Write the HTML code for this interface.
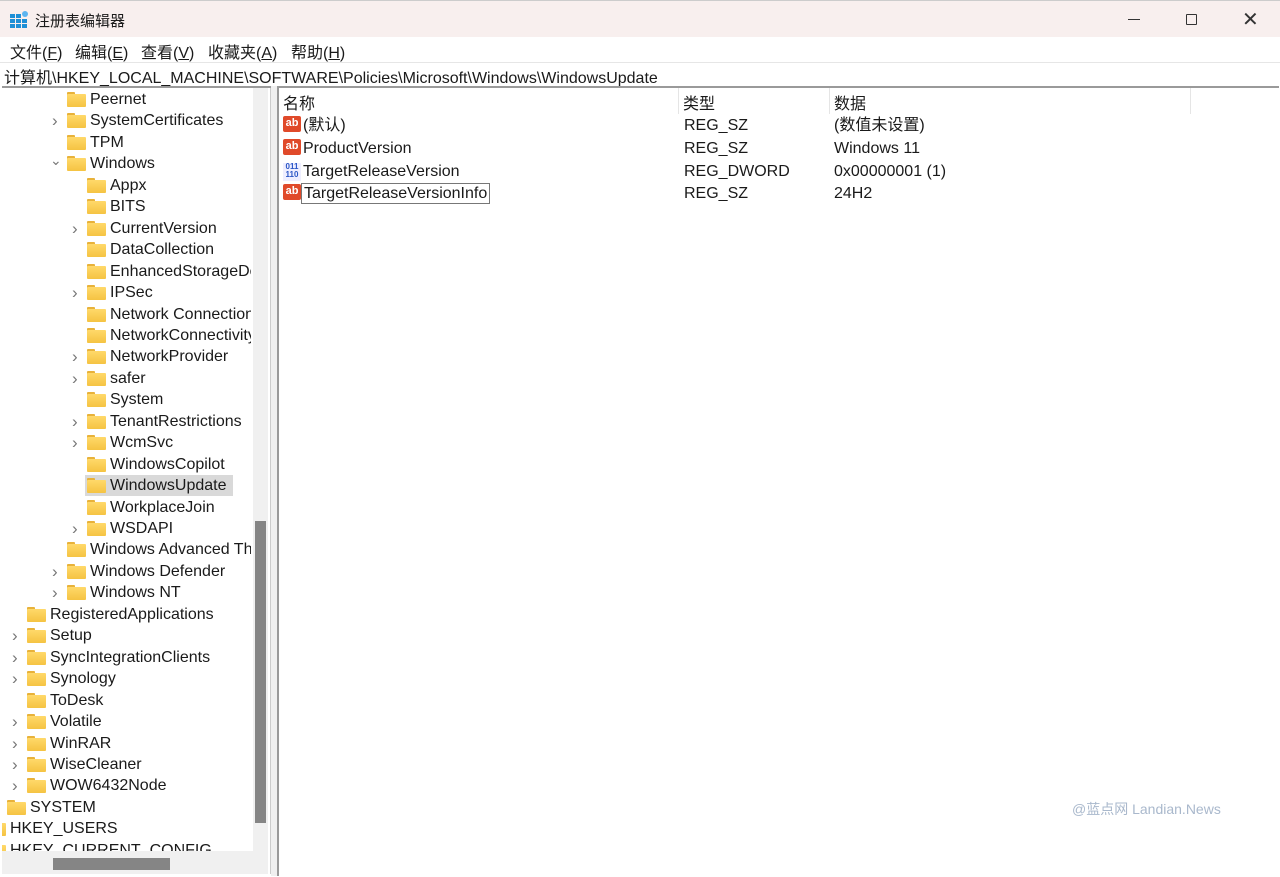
<!DOCTYPE html>
<html><head><meta charset="utf-8"><style>
*{margin:0;padding:0;box-sizing:border-box}
body{width:1280px;height:877px;background:#fff;font-family:"Liberation Sans","Microsoft YaHei","Noto Sans CJK SC",sans-serif;font-size:16px;color:#1a1a1a;position:relative;overflow:hidden}
.abs{position:absolute}
.title{left:0;top:0;width:1280px;height:37px;background:#f8efee;border-top:1px solid #ccc}
.menu{left:0;top:37px;width:1280px;height:25px;background:#fff}
.menu span{position:absolute;top:2px}
.addr{left:0;top:62px;width:1280px;height:24px;background:#fff;border-top:1px solid #e6e6e6}
.left{left:2px;top:86px;width:270px;height:788px;border-top:2px solid #9a9a9a;overflow:hidden}
.right{left:277px;top:86px;width:1002px;height:790px;border-top:2px solid #9a9a9a;border-left:2px solid #9a9a9a}
.row{position:absolute;height:21px;white-space:nowrap;line-height:21px}
.fd{position:absolute;width:19px;height:15px;top:3px}
.fd:before{content:"";position:absolute;left:0;top:0;width:8px;height:4px;background:#e8b23a;border-radius:1px 1px 0 0}
.fd:after{content:"";position:absolute;left:0;top:2px;width:19px;height:13px;background:linear-gradient(#ffd96a,#f5c342);border-radius:1px}
.chev{position:absolute;color:#777;top:0}
.ic{position:absolute;width:18px;height:18px;font-size:11px;font-weight:bold;line-height:15px;text-align:center;color:#fff}
</style></head><body>
<div class="abs title">
<svg class="abs" style="left:10px;top:9px" width="20" height="20" viewBox="0 0 20 20"><g fill="#1e8fd6"><rect x="0" y="4" width="5" height="4"/><rect x="6" y="4" width="5" height="4"/><rect x="0" y="9" width="5" height="4"/><rect x="6" y="9" width="5" height="4"/><rect x="12" y="9" width="5" height="4"/><rect x="0" y="14" width="5" height="4"/><rect x="6" y="14" width="5" height="4"/><rect x="12" y="14" width="5" height="4"/></g><circle cx="15" cy="4" r="3" fill="#5bb4f0"/></svg>
<span class="abs" style="left:35px;top:9px;font-size:15px">注册表编辑器</span>
<div class="abs" style="left:1128px;top:18px;width:12px;height:1px;background:#333"></div>
<div class="abs" style="left:1186px;top:13px;width:11px;height:11px;border:1.3px solid #333;border-radius:1px"></div>
<span class="abs" style="left:1242px;top:6px;font-size:20px;color:#333">✕</span>
</div>
<div class="abs menu"><span style="left:10px">文件(<u>F</u>)</span><span style="left:75px">编辑(<u>E</u>)</span><span style="left:141px">查看(<u>V</u>)</span><span style="left:208px">收藏夹(<u>A</u>)</span><span style="left:291px">帮助(<u>H</u>)</span></div>
<div class="abs addr"><span class="abs" style="left:4px;top:1px">计算机\HKEY_LOCAL_MACHINE\SOFTWARE\Policies\Microsoft\Windows\WindowsUpdate</span></div>
<div class="abs left">
<div id="tree"></div>
<div class="abs" style="left:249px;top:0;width:21px;height:788px;background:#fff"></div>
<div class="abs" style="left:251px;top:0;width:15px;height:788px;background:#f0f0f0"></div>
<div class="abs" style="left:253px;top:433px;width:11px;height:302px;background:#858585"></div>
<div class="abs" style="left:0;top:763px;width:251px;height:25px;background:#f0f0f0"></div>
<div class="abs" style="left:51px;top:770px;width:117px;height:12px;background:#858585"></div>
<div class="abs" style="left:268px;top:0;width:2px;height:788px;background:#ccc"></div>
</div>
<div class="abs" style="left:271px;top:86px;width:6px;height:790px;background:#f0f0f0"></div>
<div class="abs right">
<span class="abs" style="left:4px;top:2px">名称</span><span class="abs" style="left:404px;top:2px">类型</span><span class="abs" style="left:555px;top:2px">数据</span>
<div class="abs" style="left:399px;top:0;width:1px;height:26px;background:#e5e5e5"></div>
<div class="abs" style="left:550px;top:0;width:1px;height:26px;background:#e5e5e5"></div>
<div class="abs" style="left:911px;top:0;width:1px;height:26px;background:#e5e5e5"></div>
<div id="vals"></div>
<span class="abs" style="left:793px;top:711px;color:#a9b8cc;font-size:14px">@蓝点网 Landian.News</span>
</div>
<script>
var rows=[["Peernet",1,0],["SystemCertificates",1,1],["TPM",1,0],["Windows",1,2],["Appx",2,0],["BITS",2,0],["CurrentVersion",2,1],["DataCollection",2,0],["EnhancedStorageDevices",2,0],["IPSec",2,1],["Network Connections",2,0],["NetworkConnectivityStatus",2,0],["NetworkProvider",2,1],["safer",2,1],["System",2,0],["TenantRestrictions",2,1],["WcmSvc",2,1],["WindowsCopilot",2,0],["WindowsUpdate",2,0],["WorkplaceJoin",2,0],["WSDAPI",2,1],["Windows Advanced Threat Protection",1,0],["Windows Defender",1,1],["Windows NT",1,1],["RegisteredApplications",0,0],["Setup",0,1],["SyncIntegrationClients",0,1],["Synology",0,1],["ToDesk",0,0],["Volatile",0,1],["WinRAR",0,1],["WiseCleaner",0,1],["WOW6432Node",0,1],["SYSTEM",-1,0],["HKEY_USERS",-2,0],["HKEY_CURRENT_CONFIG",-2,0]];
var h='';
rows.forEach(function(r,i){var y=1+i*21.45;var lv=r[1];var fx=lv==-2?-15:lv==-1?5:lv==0?25:lv==1?65:85;var tx=fx+23;
var sel=r[0]=="WindowsUpdate";
h+='<div class="row" style="top:'+y+'px;left:0;width:251px">';
if(sel)h+='<div class="abs" style="left:'+(fx-2)+'px;top:0;width:148px;height:21px;background:#d9d9d9"></div>';
if(r[2]==1)h+='<span class="chev" style="left:'+(fx-15)+'px;font-size:17px">›</span>';
if(r[2]==2)h+='<span class="chev" style="left:'+(fx-17)+'px;font-size:14px;top:-3px">⌄</span>';
h+='<div class="fd" style="left:'+fx+'px"></div><span class="abs" style="left:'+tx+'px">'+r[0]+'</span></div>';});
document.getElementById('tree').innerHTML=h;
var v=[["(默认)","REG_SZ","(数值未设置)",0],["ProductVersion","REG_SZ","Windows 11",0],["TargetReleaseVersion","REG_DWORD","0x00000001 (1)",1],["TargetReleaseVersionInfo","REG_SZ","24H2",0]];
var g='';v.forEach(function(r,i){var y=27+i*22.8;
g+='<div class="row" style="top:'+y+'px;left:0;width:900px">';
if(r[3])g+='<div class="ic" style="left:4px;top:2px;color:#2a56c6;font-size:8px;line-height:8px;background:#eef">011<br>110</div>';
else g+='<div class="ic" style="left:4px;top:1px;background:#e04a2a;border-radius:2px;height:16px">ab</div>';
g+='<span class="abs" style="left:24px;'+(i==3?'border:1px solid #777;padding:0 2px;left:22px;line-height:19px':'')+'">'+r[0]+'</span><span class="abs" style="left:405px">'+r[1]+'</span><span class="abs" style="left:555px">'+r[2]+'</span></div>';});
document.getElementById('vals').innerHTML=g;
</script>
</body></html>
